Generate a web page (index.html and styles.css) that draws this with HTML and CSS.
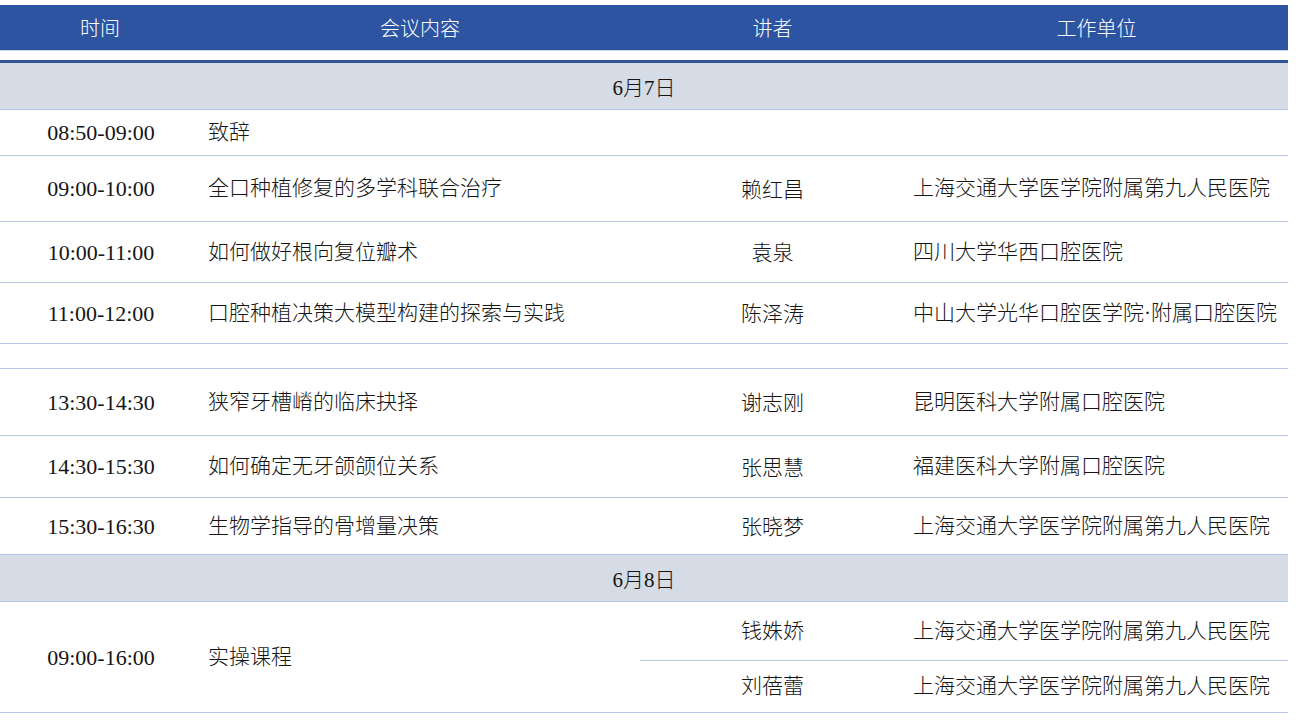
FILE: index.html
```html
<!DOCTYPE html>
<html lang="zh-CN">
<head>
<meta charset="utf-8">
<title>会议日程</title>
<link rel="stylesheet" href="styles.css">
</head>
<body>
<div class="schedule">
  <div class="row head">
    <div class="c center">时间</div>
    <div class="c center">会议内容</div>
    <div class="c center">讲者</div>
    <div class="c center">工作单位</div>
  </div>
  <div class="gap"></div>
  <div class="row date first"><div class="full">6月7日</div></div>
  <div class="row h46">
    <div class="c center time">08:50-09:00</div>
    <div class="c left">致辞</div>
    <div class="c center"></div>
    <div class="c left"></div>
  </div>
  <div class="row h66">
    <div class="c center time">09:00-10:00</div>
    <div class="c left">全口种植修复的多学科联合治疗</div>
    <div class="c center low">赖红昌</div>
    <div class="c left">上海交通大学医学院附属第九人民医院</div>
  </div>
  <div class="row h61">
    <div class="c center time">10:00-11:00</div>
    <div class="c left">如何做好根向复位瓣术</div>
    <div class="c center low">袁泉</div>
    <div class="c left">四川大学华西口腔医院</div>
  </div>
  <div class="row h61">
    <div class="c center time">11:00-12:00</div>
    <div class="c left">口腔种植决策大模型构建的探索与实践</div>
    <div class="c center low">陈泽涛</div>
    <div class="c left">中山大学光华口腔医学院·附属口腔医院</div>
  </div>
  <div class="row h25"></div>
  <div class="row h67">
    <div class="c center time">13:30-14:30</div>
    <div class="c left">狭窄牙槽嵴的临床抉择</div>
    <div class="c center low">谢志刚</div>
    <div class="c left">昆明医科大学附属口腔医院</div>
  </div>
  <div class="row h62">
    <div class="c center time">14:30-15:30</div>
    <div class="c left">如何确定无牙颌颌位关系</div>
    <div class="c center low">张思慧</div>
    <div class="c left">福建医科大学附属口腔医院</div>
  </div>
  <div class="row h57">
    <div class="c center time">15:30-16:30</div>
    <div class="c left">生物学指导的骨增量决策</div>
    <div class="c center low">张晓梦</div>
    <div class="c left">上海交通大学医学院附属第九人民医院</div>
  </div>
  <div class="row date second"><div class="full">6月8日</div></div>
  <div class="row split">
    <div class="c center span time">09:00-16:00</div>
    <div class="c left span">实操课程</div>
    <div class="c center sub1 line">钱姝娇</div>
    <div class="c left sub1 line">上海交通大学医学院附属第九人民医院</div>
    <div class="c center sub2">刘蓓蕾</div>
    <div class="c left sub2">上海交通大学医学院附属第九人民医院</div>
  </div>
</div>
</body>
</html>
```

FILE: styles.css
```css
* { box-sizing: border-box; }
html, body { margin: 0; padding: 0; background: #ffffff; }
body {
  font-family: "Liberation Serif", "Noto Sans CJK SC", serif;
  font-weight: 300;
  color: #151515;
  font-size: 21px;
}
.schedule {
  width: 1288px;
  padding-top: 5px;
}
.row {
  display: grid;
  grid-template-columns: 200px 440px 265px 383px;
  border-bottom: 1px solid #b4c6e8;
}
.c {
  display: flex;
  align-items: center;
  white-space: nowrap;
  line-height: 1;
}
.center { justify-content: center; }
.left { justify-content: flex-start; padding-left: 8px; }
.low { padding-top: 3px; }
.time { font-size: 22px; padding-top: 1px; padding-left: 2px; }
.head {
  height: 46px;
  background: #2d54a1;
  color: #ffffff;
  font-family: "Noto Sans CJK SC", sans-serif;
  font-size: 20px;
  border-bottom: 1px solid #c9d6ee;
}
.gap { height: 9px; }
.date {
  display: flex;
  align-items: center;
  justify-content: center;
  background: #d6dce5;
}
.date.first { height: 50px; border-top: 3px solid #2f5597; }
.date.second { height: 48px; border-top: 1px solid #b4c6e8; margin-top: -1px; }
.h46 { height: 46px; }
.h66 { height: 66px; }
.h61 { height: 61px; }
.h25 { height: 25px; }
.h67 { height: 67px; }
.h62 { height: 62px; }
.h57 { height: 57px; }
.split {
  height: 111px;
  grid-template-rows: 59px 51px;
}
.span { grid-row: 1 / span 2; }
.sub1 { grid-row: 1; }
.sub2 { grid-row: 2; }
.line { border-bottom: 1px solid #b4c6e8; }
.sub1.center { grid-column: 3; }
.sub1.left { grid-column: 4; }
.sub2.center { grid-column: 3; }
.sub2.left { grid-column: 4; }
```
